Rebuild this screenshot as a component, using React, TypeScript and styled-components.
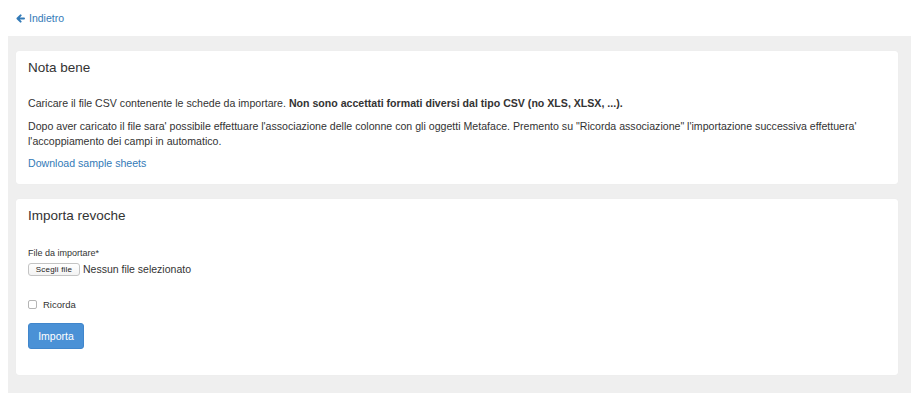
import React from "react";
import styled, { createGlobalStyle } from "styled-components";

const Global = createGlobalStyle`
  html, body { margin: 0; padding: 0; background: #ffffff; }
  body {
    font-family: "Liberation Sans", Arial, Helvetica, sans-serif;
    color: #333333;
    font-size: 10.6px;
  }
  * { box-sizing: border-box; }
`;

const Page = styled.div`
  padding: 0 8px;
  width: 917px;
`;

const TopBar = styled.div`
  height: 36px;
  display: flex;
  align-items: center;
  padding-left: 8px;
`;

const BackLink = styled.a`
  display: inline-flex;
  align-items: center;
  gap: 4px;
  color: #337ab7;
  font-size: 10.5px;
  text-decoration: none;
  cursor: pointer;
`;

const Content = styled.div`
  background: #efefef;
  padding: 15px 13px 18px 8px;
  display: flex;
  flex-direction: column;
  gap: 15px;
  width: 903px;
`;

const Card = styled.div<{ $pb?: number }>`
  background: #ffffff;
  border-radius: 3px;
  box-shadow: 0 0 1px rgba(0, 0, 0, 0.06);
  padding: 9px 12px ${(p) => p.$pb ?? 12}px;
`;

const Title = styled.h4<{ $mb: number }>`
  margin: 0 0 ${(p) => p.$mb}px;
  font-size: 13.5px;
  line-height: 15px;
  font-weight: 400;
  color: #333333;
`;

const Para = styled.p`
  margin: 0 0 7.5px;
  font-size: 10.6px;
  line-height: 15px;
  &:last-child { margin-bottom: 0; }
`;

const Link = styled.a`
  color: #337ab7;
  text-decoration: none;
  cursor: pointer;
`;

const Field = styled.div`
  display: flex;
  flex-direction: column;
  align-items: flex-start;
  gap: 3px;
`;

const Label = styled.label`
  font-size: 9px;
  line-height: 12px;
`;

const FileRow = styled.div`
  display: flex;
  align-items: center;
  gap: 3px;
  font-size: 10.5px;
  line-height: 15px;
`;

const FileButton = styled.span`
  display: inline-flex;
  align-items: center;
  justify-content: center;
  width: 52px;
  height: 13px;
  font-size: 8px;
  letter-spacing: 0.2px;
  border: 1px solid #c4c4c4;
  border-radius: 3px;
  background: linear-gradient(#ffffff, #f3f3f3);
  color: #222;
`;

const CheckRow = styled.label`
  display: flex;
  align-items: center;
  gap: 6px;
  margin-top: 22px;
  font-size: 9.5px;
  line-height: 12px;
`;

const Box = styled.span`
  width: 9px;
  height: 9px;
  border: 1px solid #b5b5b5;
  border-radius: 2px;
  background: #fff;
`;

const PrimaryButton = styled.button`
  margin-top: 12px;
  width: 56px;
  height: 26px;
  background: #4a91d6;
  border: 1px solid #4086cc;
  border-radius: 3px;
  color: #ffffff;
  font-family: "Liberation Sans", Arial, sans-serif;
  font-size: 10.5px;
  padding: 0;
`;

const ArrowLeft = () => (
  <svg width="9" height="9" viewBox="0 0 9 9">
    <path
      d="M8 4.5H2 M4.6 1.4 L1.5 4.5 L4.6 7.6"
      fill="none"
      stroke="#337ab7"
      strokeWidth="2"
      strokeLinecap="round"
      strokeLinejoin="round"
    />
  </svg>
);

export default function App() {
  return (
    <>
      <Global />
      <Page>
        <TopBar>
          <BackLink>
            <ArrowLeft />
            Indietro
          </BackLink>
        </TopBar>
        <Content>
          <Card $pb={12.5}>
            <Title $mb={21}>Nota bene</Title>
            <Para>
              Caricare il file CSV contenente le schede da importare.{" "}
              <b>Non sono accettati formati diversi dal tipo CSV (no XLS, XLSX, ...).</b>
            </Para>
            <Para>
              Dopo aver caricato il file sara' possibile effettuare l'associazione delle colonne con gli oggetti Metaface. Premento su "Ricorda associazione" l'importazione successiva effettuera' l'accoppiamento dei campi in automatico.
            </Para>
            <Para>
              <Link>Download sample sheets</Link>
            </Para>
          </Card>
          <Card $pb={26}>
            <Title $mb={24}>Importa revoche</Title>
            <Field>
              <Label>File da importare*</Label>
              <FileRow>
                <FileButton>Scegli file</FileButton>
                Nessun file selezionato
              </FileRow>
            </Field>
            <CheckRow>
              <Box />
              Ricorda
            </CheckRow>
            <PrimaryButton>Importa</PrimaryButton>
          </Card>
        </Content>
      </Page>
    </>
  );
}
